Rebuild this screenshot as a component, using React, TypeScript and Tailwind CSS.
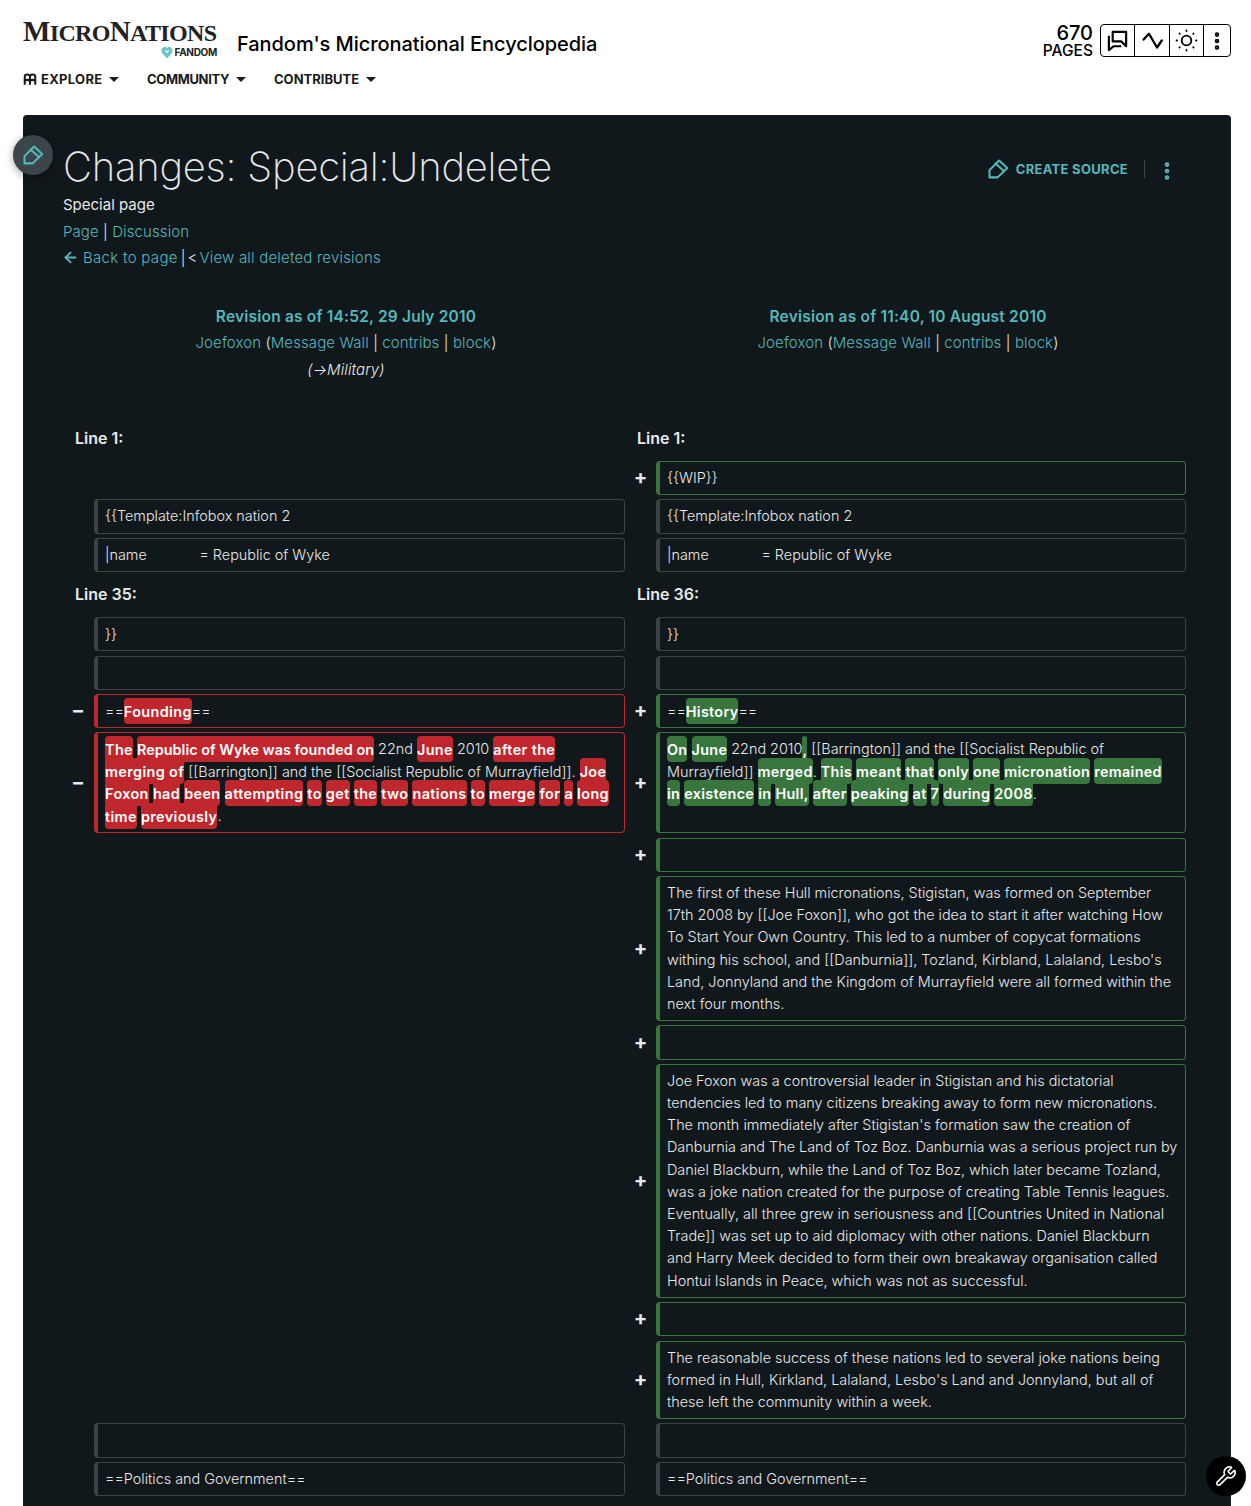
import React from 'react';
import { EllipsisVertical, ArrowLeft, Wrench } from 'lucide-react';

const FONT = "font-['Inter','Noto_Sans',sans-serif]";

// crayon icon used by the edit buttons
const Pencil = ({ className }: { className?: string }) => (
  <svg viewBox="0 0 24 24" fill="none" stroke="currentColor" strokeWidth="2.3" strokeLinejoin="round" strokeLinecap="round" className={className}>
    <path d="M1.7 21v-8.3L12.7 1.7 22 10.3 11 21H1.7z" />
    <path d="M8.6 5.1l9.9 8.9" />
  </svg>
);

const Caret = () => (
  <span className="ml-[7px] h-0 w-0 border-x-[5px] border-t-[5px] border-x-transparent border-t-[#1a1a1a]" />
);

const Del = ({ children }: { children: React.ReactNode }) => (
  <span className="rounded-[4px] bg-[#bf272d] py-[4.5px] font-semibold tracking-[0.38px] text-white">{children}</span>
);

const Add = ({ children }: { children: React.ReactNode }) => (
  <span className="rounded-[4px] bg-[#38763d] py-[4.5px] font-semibold tracking-[0.3px] text-white">{children}</span>
);

type Kind = 'ctx' | 'del' | 'add';

const Cell = ({ kind, children }: { kind: Kind; children?: React.ReactNode }) => {
  const border =
    kind === 'del' ? 'border-[#bf272d]' : kind === 'add' ? 'border-[#38763d]' : 'border-[#3b4347]';
  return (
    <div className={`min-h-[34.2px] whitespace-nowrap rounded-[4px] border border-l-4 ${border} py-[5px] pl-[7px] pr-2 leading-[22.2px]`}>
      {children}
    </div>
  );
};

const Mark = ({ sign }: { sign: '+' | '−' }) => (
  <div className="flex items-center justify-center pb-[2px] text-[20px] font-bold leading-none text-[#e8e9ea]">{sign}</div>
);

const Empty = () => <div />;

const LineLabel = ({ children, right }: { children: React.ReactNode; right?: boolean }) => (
  <div className={`col-span-2 flex h-[36.6px] items-center ${right ? 'pl-[12px]' : 'pl-[13px]'} text-[16px] font-semibold text-[#e8e9ea]`}>{children}</div>
);

const Link = ({ children }: { children: React.ReactNode }) => <span className="text-[#56b7bd]">{children}</span>;

const Revision = ({ title, note }: { title: string; note?: string }) => (
  <div className="text-center tracking-[0.1px]">
    <div className="text-[15.5px] font-semibold tracking-[0.2px] text-[#56b7bd]">{title}</div>
    <div>
      <Link>Joefoxon</Link> (<Link>Message Wall</Link> | <Link>contribs</Link> | <Link>block</Link>)
    </div>
    {note && <div className="italic">{note}</div>}
  </div>
);

export default function App() {
  return (
    <div className={`relative h-[1506px] overflow-hidden bg-white text-black ${FONT}`}>
      <header className="h-[115px] pl-[23px] pr-[20px] pt-[18px]">
        <div className="flex items-start justify-between">
          <div className="flex items-end">
            <div className="mt-[1px] w-[194px]">
              <div className="font-['Liberation_Serif',serif] text-[29px] font-bold leading-[25px] tracking-[-0.65px] text-[#222]">
                M<span className="text-[24px]">ICRO</span>N<span className="text-[24px]">ATIONS</span>
              </div>
              <div className="flex items-center justify-end gap-[1px] text-[10px] font-bold leading-[13px] tracking-[-0.3px] text-[#222]">
                <svg viewBox="0 0 24 24" className="h-[13px] w-[14px]" fill="#6cc5cb">
                  <path d="M12 23L2 12V6l4-4h4l2 2 2-2h4l4 4v6L12 23zM8 8l4 6 4-6h-2l-2 2-2-2H8z" />
                </svg>
                FANDOM
              </div>
            </div>
            <div className="ml-[20px] pb-[3px] text-[20px] font-medium leading-[24px] tracking-[-0.06px]">
              Fandom's Micronational Encyclopedia
            </div>
          </div>
          <div className="mt-[5px] flex items-center gap-[7px]">
            <div className="mt-[1.5px] text-right font-medium leading-[17px]">
              <div className="text-[20px]">670</div>
              <div className="text-[15.5px]">PAGES</div>
            </div>
            <div className="flex h-[33px] w-[131px] rounded-[4px] border border-black">
              <div className="flex w-[34px] items-center justify-center border-r border-black">
                <svg viewBox="0 0 24 24" fill="none" stroke="currentColor" strokeWidth="2.3" strokeLinejoin="round" className="h-[23px] w-[23px]">
                  <path d="M3 7v15l5-4h8" />
                  <path d="M7 3h14v15l-5-5H7V3z" />
                </svg>
              </div>
              <div className="flex w-[35px] items-center justify-center border-r border-black">
                <svg viewBox="0 0 24 24" fill="none" stroke="currentColor" strokeWidth="2.4" strokeLinejoin="round" strokeLinecap="round" className="h-[23px] w-[23px]">
                  <path d="M2.7 11L8.3 5l8.4 14.3 5-7.3" />
                </svg>
              </div>
              <div className="flex w-[34px] items-center justify-center border-r border-black">
                <svg viewBox="0 0 24 24" fill="none" stroke="currentColor" strokeWidth="1.9" strokeLinecap="round" className="h-[23px] w-[23px]">
                  <circle cx="12" cy="12" r="5" />
                  <path d="M12 1.6v.5M12 21.9v.5M1.6 12h.5M21.9 12h.5M4.7 4.7l.3.3M19 19l.3.3M4.7 19.3l.3-.3M19 5l.3-.3" />
                </svg>
              </div>
              <div className="flex flex-1 items-center justify-center">
                <EllipsisVertical size={22} strokeWidth={3} />
              </div>
            </div>
          </div>
        </div>
        <nav className="mt-[10px] flex text-[13px] font-bold leading-[20px] text-[#1a1a1a]">
          <div className="flex w-[124px] items-center tracking-[0.3px]">
            <svg viewBox="0 0 24 24" className="mr-[4px] h-[14px] w-[14px]" fill="none" stroke="currentColor" strokeWidth="3.5">
              <path d="M3 22V8c0-5 9-5 9 0v14M12 8c0-5 9-5 9 0v14M3 15c3-2 6-2 9 0 3-2 6-2 9 0" />
            </svg>
            EXPLORE
            <Caret />
          </div>
          <div className="flex w-[127px] items-center tracking-[-0.35px]">
            COMMUNITY
            <Caret />
          </div>
          <div className="flex items-center">
            CONTRIBUTE
            <Caret />
          </div>
        </nav>
      </header>

      <main className="ml-[23px] mr-[20px] h-[1391px] rounded-t-[4px] bg-[#11181b] pl-[40px] pr-[45px] pt-[26px] text-[15px] font-light leading-[26.6px] text-[#e8e9ea]">
        <div className="flex items-start justify-between">
          <div className="tracking-[0.1px]">
            <h1 className="text-[40px] font-extralight leading-[52px] tracking-[-0.25px]">Changes: Special:Undelete</h1>
            <div className="mt-[-1px] font-normal tracking-normal">Special page</div>
            <div>
              <Link>Page</Link> | <Link>Discussion</Link>
            </div>
            <div className="flex items-center">
              <ArrowLeft size={17} strokeWidth={2.5} className="-ml-px mb-[2px] mr-[4px] text-[#56b7bd]" />
              <span className="tracking-[0.3px]">
                <Link>Back to page</Link>
              </span>
              <span className="ml-[3px]">|</span>
              <span className="ml-[2px]">&lt;</span>
              <span className="ml-[2px] tracking-[0.2px]">
                <Link>View all deleted revisions</Link>
              </span>
            </div>
          </div>
          <div className="mr-[8px] mt-[15px] flex items-center">
            <Pencil className="mr-[7px] h-[21px] w-[21px] text-[#56b7bd]" />
            <span className="text-[13px] font-bold tracking-[0.3px] text-[#56b7bd]">CREATE SOURCE</span>
            <span className="ml-[16px] h-[18px] w-px bg-[#3b4347]" />
            <EllipsisVertical size={22} strokeWidth={3} className="ml-[11px] mt-[3px] text-[#56b7bd]" />
          </div>
        </div>

        <div className="mt-[32px] grid grid-cols-[566px_558px]">
          <Revision title="Revision as of 14:52, 29 July 2010" note="(→Military)" />
          <Revision title="Revision as of 11:40, 10 August 2010" />
        </div>

        <div className="-ml-px mt-[36.5px] grid grid-cols-[32px_531px_31px_530px] gap-y-[4.25px] text-[14.4px] font-light">
          <LineLabel>Line 1:</LineLabel>
          <LineLabel right>Line 1:</LineLabel>

          <Empty />
          <Empty />
          <Mark sign="+" />
          <Cell kind="add">{'{{WIP}}'}</Cell>

          <Empty />
          <Cell kind="ctx">{'{{Template:Infobox nation 2'}</Cell>
          <Empty />
          <Cell kind="ctx">{'{{Template:Infobox nation 2'}</Cell>

          <Empty />
          <Cell kind="ctx">|name{'\u00a0\u00a0\u00a0\u00a0\u00a0\u00a0\u00a0\u00a0\u00a0\u00a0\u00a0\u00a0\u00a0'}= Republic of Wyke</Cell>
          <Empty />
          <Cell kind="ctx">|name{'\u00a0\u00a0\u00a0\u00a0\u00a0\u00a0\u00a0\u00a0\u00a0\u00a0\u00a0\u00a0\u00a0'}= Republic of Wyke</Cell>

          <LineLabel>Line 35:</LineLabel>
          <LineLabel right>Line 36:</LineLabel>

          <Empty />
          <Cell kind="ctx">{'}}'}</Cell>
          <Empty />
          <Cell kind="ctx">{'}}'}</Cell>

          <Empty />
          <Cell kind="ctx" />
          <Empty />
          <Cell kind="ctx" />

          <Mark sign="−" />
          <Cell kind="del">
            ==<Del>Founding</Del>==
          </Cell>
          <Mark sign="+" />
          <Cell kind="add">
            ==<Add>History</Add>==
          </Cell>

          <Mark sign="−" />
          <Cell kind="del">
            <Del>The</Del>{' '}
            <span className="rounded-[4px] bg-[#bf272d] py-[4.5px] font-semibold tracking-[0.02px] text-white">
              Republic of Wyke was founded on
            </span>{' '}
            22nd <Del>June</Del> 2010 <Del>after the</Del>
            <br />
            <Del>merging of</Del> [[Barrington]] and the [[Socialist Republic of Murrayfield]]. <Del>Joe</Del>
            <br />
            <Del>Foxon</Del> <Del>had</Del> <Del>been</Del> <Del>attempting</Del> <Del>to</Del> <Del>get</Del> <Del>the</Del> <Del>two</Del>{' '}
            <Del>nations</Del> <Del>to</Del> <Del>merge</Del> <Del>for</Del> <Del>a</Del> <Del>long</Del>
            <br />
            <Del>time</Del> <Del>previously</Del>.
          </Cell>
          <Mark sign="+" />
          <Cell kind="add">
            <Add>On</Add> <Add>June</Add> 22nd 2010<Add>,</Add> [[Barrington]] and the [[Socialist Republic of
            <br />
            Murrayfield]] <Add>merged</Add>. <Add>This</Add> <Add>meant</Add> <Add>that</Add> <Add>only</Add> <Add>one</Add>{' '}
            <Add>micronation</Add> <Add>remained</Add>
            <br />
            <Add>in</Add> <Add>existence</Add> <Add>in</Add> <Add>Hull,</Add> <Add>after</Add> <Add>peaking</Add> <Add>at</Add> <Add>7</Add>{' '}
            <Add>during</Add> <Add>2008</Add>.
          </Cell>

          <Empty />
          <Empty />
          <Mark sign="+" />
          <Cell kind="add" />

          <Empty />
          <Empty />
          <Mark sign="+" />
          <Cell kind="add">
            The first of these Hull micronations, Stigistan, was formed on September
            <br />
            17th 2008 by [[Joe Foxon]], who got the idea to start it after watching How
            <br />
            To Start Your Own Country. This led to a number of copycat formations
            <br />
            withing his school, and [[Danburnia]], Tozland, Kirbland, Lalaland, Lesbo's
            <br />
            Land, Jonnyland and the Kingdom of Murrayfield were all formed within the
            <br />
            next four months.
          </Cell>

          <Empty />
          <Empty />
          <Mark sign="+" />
          <Cell kind="add" />

          <Empty />
          <Empty />
          <Mark sign="+" />
          <Cell kind="add">
            Joe Foxon was a controversial leader in Stigistan and his dictatorial
            <br />
            tendencies led to many citizens breaking away to form new micronations.
            <br />
            The month immediately after Stigistan's formation saw the creation of
            <br />
            Danburnia and The Land of Toz Boz. Danburnia was a serious project run by
            <br />
            Daniel Blackburn, while the Land of Toz Boz, which later became Tozland,
            <br />
            was a joke nation created for the purpose of creating Table Tennis leagues.
            <br />
            Eventually, all three grew in seriousness and [[Countries United in National
            <br />
            Trade]] was set up to aid diplomacy with other nations. Daniel Blackburn
            <br />
            and Harry Meek decided to form their own breakaway organisation called
            <br />
            Hontui Islands in Peace, which was not as successful.
          </Cell>

          <Empty />
          <Empty />
          <Mark sign="+" />
          <Cell kind="add" />

          <Empty />
          <Empty />
          <Mark sign="+" />
          <Cell kind="add">
            The reasonable success of these nations led to several joke nations being
            <br />
            formed in Hull, Kirkland, Lalaland, Lesbo's Land and Jonnyland, but all of
            <br />
            these left the community within a week.
          </Cell>

          <Empty />
          <Cell kind="ctx" />
          <Empty />
          <Cell kind="ctx" />

          <Empty />
          <Cell kind="ctx">==Politics and Government==</Cell>
          <Empty />
          <Cell kind="ctx">==Politics and Government==</Cell>
        </div>
      </main>

      <div className="absolute left-[13px] top-[135px] flex h-[40px] w-[40px] items-center justify-center rounded-full bg-[#3a4649] shadow-[0_2px_8px_rgba(0,0,0,0.35)]">
        <Pencil className="h-[21px] w-[21px] text-[#56b7bd]" />
      </div>
      <div className="absolute left-[1206px] top-[1456px] flex h-[40px] w-[40px] items-center justify-center rounded-full bg-black">
        <Wrench size={22} strokeWidth={1.75} className="text-white" />
      </div>
    </div>
  );
}
